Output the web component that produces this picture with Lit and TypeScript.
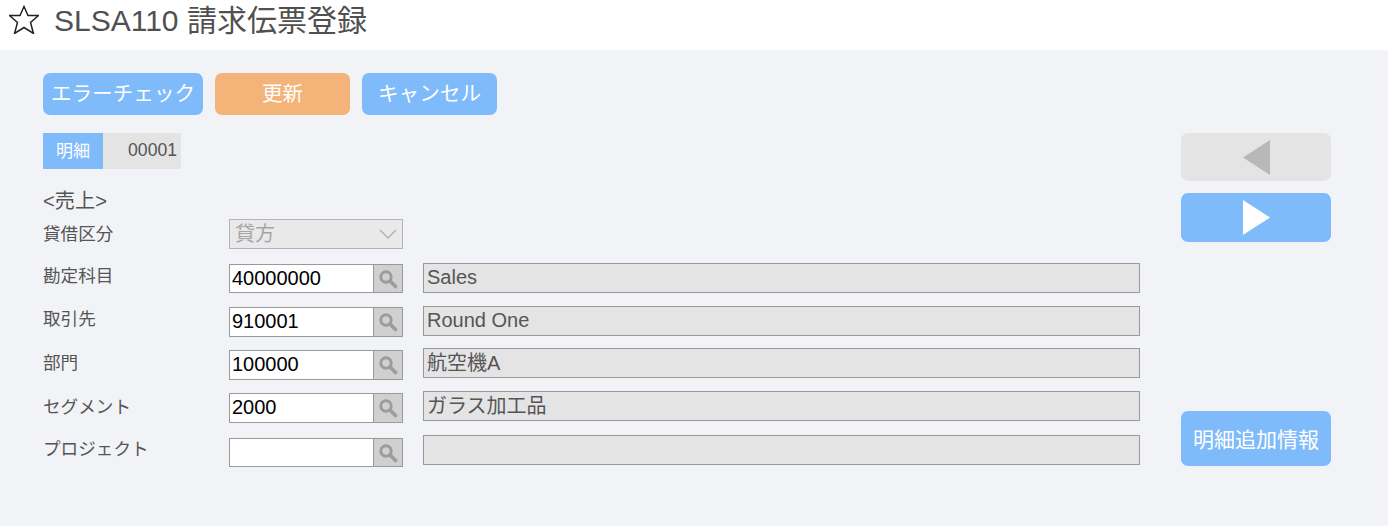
import { css, html, LitElement } from 'lit';
import { customElement } from 'lit/decorators.js';

// gap/drop/labelTop/height: the rows of the original are not evenly spaced
const ROWS = [
  { label: '勘定科目', code: '40000000', name: 'Sales', gap: 14, drop: 1, labelTop: 0, height: 29, nameLine: 26 },
  { label: '取引先', code: '910001', name: 'Round One', gap: 13, drop: 1, labelTop: 0, height: 30, nameLine: 26 },
  { label: '部門', code: '100000', name: '航空機A', gap: 12, drop: 2, labelTop: 2, height: 30, nameLine: 29 },
  { label: 'セグメント', code: '2000', name: 'ガラス加工品', gap: 13, drop: 2, labelTop: 3, height: 30, nameLine: 28 },
  { label: 'プロジェクト', code: '', name: '', gap: 14, drop: 3, labelTop: 1, height: 29, nameLine: 26 },
];

@customElement('app-root')
export class AppRoot extends LitElement {
  static styles = css`
    :host {
      display: block;
      height: 526px;
      overflow: hidden;
      background: #f2f3f7;
      color: #555;
      font-family: 'Liberation Sans', 'Noto Sans CJK JP', sans-serif;
    }

    .header {
      display: flex;
      align-items: center;
      height: 50px;
      padding-left: 9px;
      background: #fff;
    }

    .star {
      width: 30px;
      height: 30px;
      margin: -13px 15px 0 0;
      flex: none;
    }

    .title {
      font-size: 30px;
      line-height: 36px;
      margin-top: -8px;
      color: #505050;
    }

    .main {
      padding: 23px 57px 0 43px;
    }

    .actions {
      display: flex;
      gap: 12px;
      height: 42px;
    }

    .btn {
      display: flex;
      align-items: center;
      justify-content: center;
      box-sizing: border-box;
      padding-bottom: 4px;
      background: #7fbafa;
      color: #fff;
      border-radius: 7px;
      font-size: 20.6px;
      white-space: nowrap;
    }

    .btn.check { width: 160px; }
    .btn.update { width: 135px; background: #f4b379; }
    .btn.cancel { width: 135px; }

    .content {
      display: flex;
      justify-content: space-between;
      margin-top: 18px;
    }

    .form {
      width: 1097px;
    }

    .tab {
      display: flex;
      height: 36px;
      width: 138px;
      line-height: 34px;
    }

    .tab-label {
      width: 60px;
      text-align: center;
      background: #7fbafa;
      color: #fff;
      font-size: 17px;
      line-height: 37px;
    }

    .tab-value {
      flex: 1;
      text-align: right;
      padding-right: 4px;
      background: #e4e4e4;
      font-size: 17.6px;
    }

    .section {
      margin-top: 20px;
      font-size: 20.2px;
      line-height: 24px;
    }

    .row {
      display: flex;
      height: 30px;
    }

    .row.first {
      margin-top: 6px;
    }

    .label {
      width: 186px;
      flex: none;
      font-size: 17.6px;
      line-height: 26px;
    }

    .first .label {
      padding-top: 2px;
    }

    .select {
      display: flex;
      align-items: center;
      justify-content: space-between;
      box-sizing: border-box;
      width: 174px;
      height: 30px;
      padding: 0 5px 3px 5px;
      background: #e9e9ea;
      border: 1px solid #b4b4b4;
      color: #a5a5a5;
      font-size: 20px;
    }

    .select svg {
      margin-top: 3px;
    }

    .lookup {
      display: flex;
      flex: none;
      box-sizing: border-box;
      width: 174px;
      border: 1px solid #999;
      background: #fff;
    }

    .code {
      flex: 1;
      padding-left: 2px;
      color: #000;
      font-size: 20px;
      line-height: 27px;
    }

    .search {
      display: flex;
      align-items: center;
      justify-content: center;
      width: 28px;
      background: #d0d0d0;
      border-left: 1px solid #999;
    }

    .search svg {
      filter: blur(0.5px);
    }

    .name {
      box-sizing: border-box;
      flex: 1;
      height: 30px;
      margin-left: 20px;
      padding-left: 3px;
      background: #e4e4e4;
      border: 1px solid #999;
      font-size: 20px;
    }

    .side {
      display: flex;
      flex-direction: column;
      width: 150px;
    }

    .nav {
      display: flex;
      align-items: center;
      justify-content: center;
      height: 48px;
      border-radius: 7px;
      background: #e4e4e4;
    }

    .nav.next {
      height: 49px;
      margin-top: 12px;
      background: #7fbafa;
    }

    .btn.extra {
      height: 55px;
      margin-top: 169px;
      padding-bottom: 2px;
      font-size: 21px;
    }
  `;

  render() {
    return html`
      <div class="header">
        <svg class="star" viewBox="0 0 30 30">
          <path
            d="M15 2.5L19 11.5H29.5L21.5 18.5L24.5 29.5L15 23.5L5.5 29.5L8.5 18.5L.5 11.5H11z"
            fill="none"
            stroke="#222"
            stroke-width="1.5"
          ></path>
        </svg>
        <div class="title">SLSA110 請求伝票登録</div>
      </div>
      <div class="main">
        <div class="actions">
          <div class="btn check">エラーチェック</div>
          <div class="btn update">更新</div>
          <div class="btn cancel">キャンセル</div>
        </div>
        <div class="content">
          <div class="form">
            <div class="tab">
              <div class="tab-label">明細</div>
              <div class="tab-value">00001</div>
            </div>
            <div class="section">&lt;売上&gt;</div>
            <div class="row first">
              <div class="label">貸借区分</div>
              <div class="select">
                <span>貸方</span>
                <svg width="18" height="10" viewBox="0 0 18 10">
                  <path d="M1 1l8 8 8-8" fill="none" stroke="#aaa" stroke-width="1.2"></path>
                </svg>
              </div>
            </div>
            ${ROWS.map(
              (r) => html`
                <div class="row" style="margin-top:${r.gap}px">
                  <div class="label" style="padding-top:${r.labelTop}px">${r.label}</div>
                  <div class="lookup" style="margin-top:${r.drop}px;height:${r.height}px">
                    <div class="code">${r.code}</div>
                    <div class="search">
                      <svg width="22" height="22" viewBox="0 0 22 22">
                        <circle cx="9" cy="9" r="5.2" fill="none" stroke="#9c9c9c" stroke-width="3"></circle>
                        <path d="M13.5 13.5l5 5" stroke="#9c9c9c" stroke-width="3.6" stroke-linecap="round"></path>
                      </svg>
                    </div>
                  </div>
                  <div class="name" style="line-height:${r.nameLine}px">${r.name}</div>
                </div>
              `,
            )}
          </div>
          <div class="side">
            <div class="nav">
              <svg width="27" height="35" viewBox="0 0 27 35"><path d="M0 17.5L27 0v35z" fill="#b8b8b8"></path></svg>
            </div>
            <div class="nav next">
              <svg width="27" height="35" viewBox="0 0 27 35"><path d="M27 17.5L0 0v35z" fill="#fff"></path></svg>
            </div>
            <div class="btn extra">明細追加情報</div>
          </div>
        </div>
      </div>
    `;
  }
}
